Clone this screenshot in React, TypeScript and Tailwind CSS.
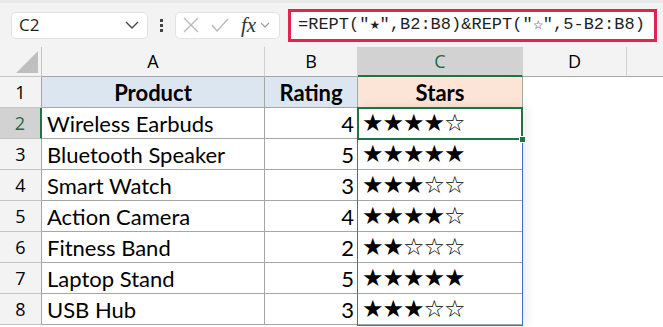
import React from "react";

const rows = [
  { name: "Wireless Earbuds", rating: 4 },
  { name: "Bluetooth Speaker", rating: 5 },
  { name: "Smart Watch", rating: 3 },
  { name: "Action Camera", rating: 4 },
  { name: "Fitness Band", rating: 2 },
  { name: "Laptop Stand", rating: 5 },
  { name: "USB Hub", rating: 3 },
];

const stars = (n: number) => "★".repeat(n) + "☆".repeat(5 - n);

const cellFont = "font-['Lato','Noto_Sans',sans-serif] text-[22px] text-black";
const headFont = "font-['Open_Sans','Noto_Sans',sans-serif] text-[18px]";
const fStar = "inline-block w-[10.2px] text-center font-['DejaVu_Sans',sans-serif] text-[12px]";

export default function App() {
  return (
    <div className="w-[663px] h-[327px] bg-white overflow-hidden">
      {/* formula bar */}
      <div className="h-[47px] bg-[#f3f3f3] border-t-[3px] border-[#e9e9e9] flex items-center pl-[11px] pr-[6px]">
        <div className="w-[137px] h-[27px] bg-white rounded-[5px] border border-[#e2e2e2] flex items-center justify-between pl-[7px] pr-[8px]">
          <span className="font-['Open_Sans',sans-serif] text-[17px] text-[#1f1f1f]">C2</span>
          <svg width="14" height="8" viewBox="0 0 14 8" fill="none" stroke="#444" strokeWidth="1.4">
            <path d="M1 1l6 6 6-6" />
          </svg>
        </div>
        <div className="w-[27px] flex flex-col items-center gap-[2px]">
          <span className="w-[3px] h-[3px] bg-[#444]" />
          <span className="w-[3px] h-[3px] bg-[#444]" />
          <span className="w-[3px] h-[3px] bg-[#444]" />
        </div>
        <div className="w-[105px] h-[27px] bg-white rounded-[5px] border border-[#e2e2e2] flex items-center pl-[7px] gap-[12px]">
          <svg width="16" height="16" viewBox="0 0 16 16" fill="none" stroke="#b9b9b9" strokeWidth="1.3">
            <path d="M1 1l14 14M15 1L1 15" />
          </svg>
          <svg width="18" height="14" viewBox="0 0 18 14" fill="none" stroke="#b9b9b9" strokeWidth="1.3">
            <path d="M1 7l5 6L17 1" />
          </svg>
          <div className="flex items-center gap-[4px]">
            <span className="font-['Liberation_Serif',serif] italic text-[21px] text-[#333] leading-none">fx</span>
            <svg width="10" height="6" viewBox="0 0 10 6" fill="none" stroke="#999" strokeWidth="1.1">
              <path d="M1 1l4 4 4-4" />
            </svg>
          </div>
        </div>
        <div className="ml-[8px] flex-1 h-[33px] bg-white border-[3px] border-[#e3234f] flex items-center pl-[7px]">
          <span className="font-['Liberation_Mono',monospace] text-[17px] text-[#1f1f1f] whitespace-nowrap">
            =REPT("<span className={fStar}>★</span>",B2:B8)&amp;REPT("<span className={fStar}>☆</span>",5-B2:B8)
          </span>
        </div>
      </div>

      {/* grid */}
      <div className="relative grid grid-cols-[42px_223px_93px_165px_104px_1fr] grid-rows-[30px_repeat(8,31px)]">
        {/* column headers */}
        <div className="bg-[#f3f3f3] border-r border-b border-[#c4c4c4] relative overflow-hidden">
          <div className="absolute right-[3px] bottom-[3px] w-0 h-0 border-l-[22px] border-l-transparent border-b-[22px] border-b-[#bfbfbf]" />
        </div>
        {["A", "B"].map((c) => (
          <div key={c} className={`bg-[#f3f3f3] border-r border-b border-r-[#d0d0d0] border-b-[#a6a6a6] flex items-center justify-center text-black ${headFont}`}>
            {c}
          </div>
        ))}
        <div className={`bg-[#d2d2d2] border-r border-r-[#d0d0d0] border-b-2 border-b-[#217346] flex items-center justify-center text-[#1d6b3f] ${headFont}`}>
          C
        </div>
        <div className={`bg-[#f3f3f3] border-r border-b border-r-[#d0d0d0] border-b-[#a6a6a6] flex items-center justify-center text-black ${headFont}`}>
          D
        </div>
        <div className="bg-[#f3f3f3] border-b border-[#a6a6a6]" />

        {/* row 1 */}
        <div className={`bg-[#f3f3f3] border-r border-b border-r-[#a6a6a6] border-b-[#c4c4c4] flex items-center justify-center text-black ${headFont}`}>1</div>
        <div className={`bg-[#dce6f1] border-r border-b border-[#a6a6a6] flex items-center justify-center font-bold ${cellFont}`}>Product</div>
        <div className={`bg-[#dce6f1] border-r border-b border-[#a6a6a6] flex items-center justify-center font-bold ${cellFont}`}>Rating</div>
        <div className={`bg-[#fce4d6] border-r border-b border-[#a6a6a6] flex items-center justify-center font-bold ${cellFont}`}>Stars</div>
        <div />
        <div />

        {rows.map((r, i) => {
          const sel = i === 0;
          return (
            <React.Fragment key={r.name}>
              <div
                className={`border-b flex items-center justify-center ${headFont} ${
                  sel
                    ? "bg-[#d2d2d2] text-[#1d6b3f] border-r-2 border-r-[#217346] border-b-[#c4c4c4]"
                    : "bg-[#f3f3f3] text-black border-r border-r-[#a6a6a6] border-b-[#c4c4c4]"
                }`}
              >
                {i + 2}
              </div>
              <div className={`border-r border-b border-[#a6a6a6] flex items-center pl-[5px] ${cellFont}`}>{r.name}</div>
              <div className={`border-r border-b border-[#a6a6a6] flex items-center justify-end pr-[3px] ${cellFont}`}>{r.rating}</div>
              <div className="border-r border-b border-[#a6a6a6] flex items-center pl-[4px] font-['DejaVu_Sans',sans-serif] text-[24px] text-black leading-none tracking-[-1px]">
                {stars(r.rating)}
              </div>
              <div />
              <div />
            </React.Fragment>
          );
        })}

        {/* spill range border C2:C8 */}
        <div className="absolute left-[357px] top-[60px] w-[166px] h-[219px] border border-[#3a6fcf] shadow-[4px_0_10px_rgba(0,0,0,0.08)] pointer-events-none" />
        {/* active cell C2 */}
        <div className="absolute left-[357px] top-[60px] w-[166px] h-[33px] border-2 border-[#217346] pointer-events-none" />
        <div className="absolute left-[519px] top-[89px] w-[7px] h-[7px] bg-[#217346] border border-white pointer-events-none" />
      </div>
    </div>
  );
}
